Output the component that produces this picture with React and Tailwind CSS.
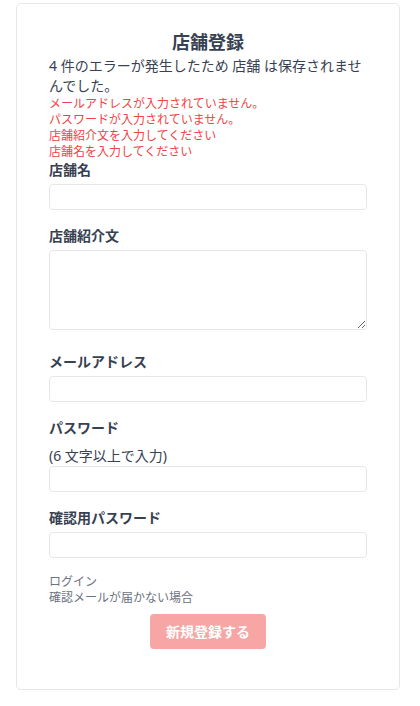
import React from 'react';

const errors = [
  'メールアドレスが入力されていません。',
  'パスワードが入力されていません。',
  '店舗紹介文を入力してください',
  '店舗名を入力してください',
];

const Label = ({ children }) => (
  <label className="block text-sm leading-5 font-bold text-[#374151]">{children}</label>
);

const Input = ({ type = 'text' }) => (
  <input
    type={type}
    className="mt-1 block w-full h-[26px] px-2 bg-white border border-[#e5e7eb] rounded-[4px] text-sm outline-none"
  />
);

const App = () => {
  return (
    <div
      className="min-h-screen bg-white pt-[3px]"
      style={{ fontFamily: '"Noto Sans", "Noto Sans CJK JP", sans-serif' }}
    >
      <div className="ml-4 w-[384px] border border-[#e5e7eb] rounded-[5px] px-8 pt-6 pb-10 h-[687px]">
        <h1 className="text-center text-lg leading-7 font-bold text-[#374151]">店舗登録</h1>

        <p className="text-sm leading-5 text-[#374151]">
          4 件のエラーが発生したため 店舗 は保存されませんでした。
        </p>
        <ul>
          {errors.map((e) => (
            <li key={e} className="text-xs leading-4 text-[#ef4444]">{e}</li>
          ))}
        </ul>

        <form onSubmit={(e) => e.preventDefault()}>
          <div>
            <Label>店舗名</Label>
            <Input />
          </div>

          <div className="mt-4">
            <Label>店舗紹介文</Label>
            <textarea className="mt-1 block w-full h-[80px] px-2 bg-white border border-[#e5e7eb] rounded-[4px] text-sm outline-none" />
          </div>

          <div className="mt-[22px]">
            <Label>メールアドレス</Label>
            <Input type="email" />
          </div>

          <div className="mt-4">
            <Label>パスワード</Label>
            <p className="mt-2 text-sm leading-5 text-[#374151]">(6 文字以上で入力)</p>
            <input
              type="password"
              className="block w-full h-[26px] px-2 bg-white border border-[#e5e7eb] rounded-[4px] text-sm outline-none"
            />
          </div>

          <div className="mt-4">
            <Label>確認用パスワード</Label>
            <Input type="password" />
          </div>

          <div className="mt-4 text-xs leading-4 text-[#6b7280]">
            <a className="block">ログイン</a>
            <a className="block">確認メールが届かない場合</a>
          </div>

          <div className="mt-2 flex justify-center">
            <button
              type="submit"
              className="h-[35px] px-4 rounded-[4px] bg-[#f8a5a5] text-white text-sm font-bold"
            >
              新規登録する
            </button>
          </div>
        </form>
      </div>
    </div>
  );
};

export default App;
